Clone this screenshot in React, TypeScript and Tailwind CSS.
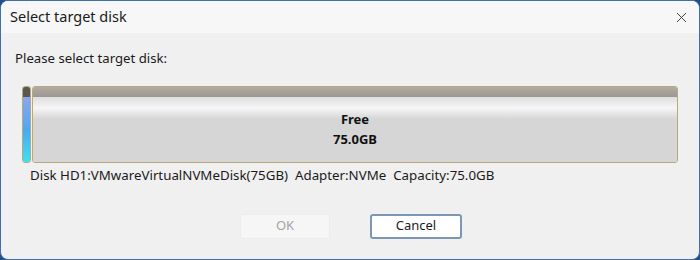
import { X } from 'lucide-react';

const font = { fontFamily: '"Noto Sans", "Open Sans", Arial, sans-serif' };

export default function App() {
  return (
    <div className="w-[700px] h-[260px] bg-[#1f4f8a]" style={font}>
      <div className="w-full h-full rounded-[8px] border border-[#3d6fa8] bg-[#f0f0f0] overflow-hidden flex flex-col">
        {/* title bar */}
        <div className="h-[32px] bg-[#f7f7f7] flex items-center justify-between pl-[9px] pr-[6px]">
          <span className="text-[14.5px] text-[#1a1a1a]">Select target disk</span>
          <X className="w-[17px] h-[17px] text-[#333] mr-[3px]" strokeWidth={1.3} />
        </div>

        <div className="flex-1 flex flex-col px-[21px]">
          <p className="text-[13.2px] text-[#1a1a1a] mt-[16px] ml-[-7px]">Please select target disk:</p>

          {/* disk map */}
          <div className="mt-[17px] flex h-[77px] gap-[1px]">
            <div className="w-[9px] flex flex-col rounded-[3px] border border-[#b9a97a] overflow-hidden">
              <div className="h-[10px] bg-[#5a5650]" />
              <div className="flex-1 bg-gradient-to-b from-[#8aa6ee] via-[#4aa8f2] to-[#3ee0f0]" />
            </div>
            <div className="flex-1 flex flex-col rounded-[3px] border border-[#b9a97a] overflow-hidden">
              <div className="h-[10px] bg-gradient-to-b from-[#b0aca5] to-[#9c9890]" />
              <div className="flex-1 relative bg-gradient-to-b from-[#dedede] via-[#f6f6f6] to-[#d6d6d6] [background-size:100%_22px] bg-no-repeat bg-[#d6d6d6] flex flex-col items-center justify-center pb-[1px]">
                <span className="text-[13px] font-bold text-[#111] leading-[20px]">Free</span>
                <span className="text-[13px] font-bold text-[#111] leading-[20px]">75.0GB</span>
              </div>
            </div>
          </div>

          <p className="text-[13.3px] text-[#1a1a1a] mt-[3px] ml-[8px] whitespace-pre">
            Disk HD1:VMwareVirtualNVMeDisk(75GB)  Adapter:NVMe  Capacity:75.0GB
          </p>

          <div className="mt-[28px] flex justify-center gap-[40px] pl-[2px]">
            <button className="w-[90px] h-[25px] rounded-[3px] bg-[#f6f6f6] border border-[#ececec] text-[13px] text-[#a3a3a3]">
              OK
            </button>
            <button className="w-[92px] h-[25px] rounded-[3px] bg-white border-2 border-[#7c97b3] text-[13px] text-[#1a1a1a]">
              Cancel
            </button>
          </div>
        </div>
      </div>
    </div>
  );
}
